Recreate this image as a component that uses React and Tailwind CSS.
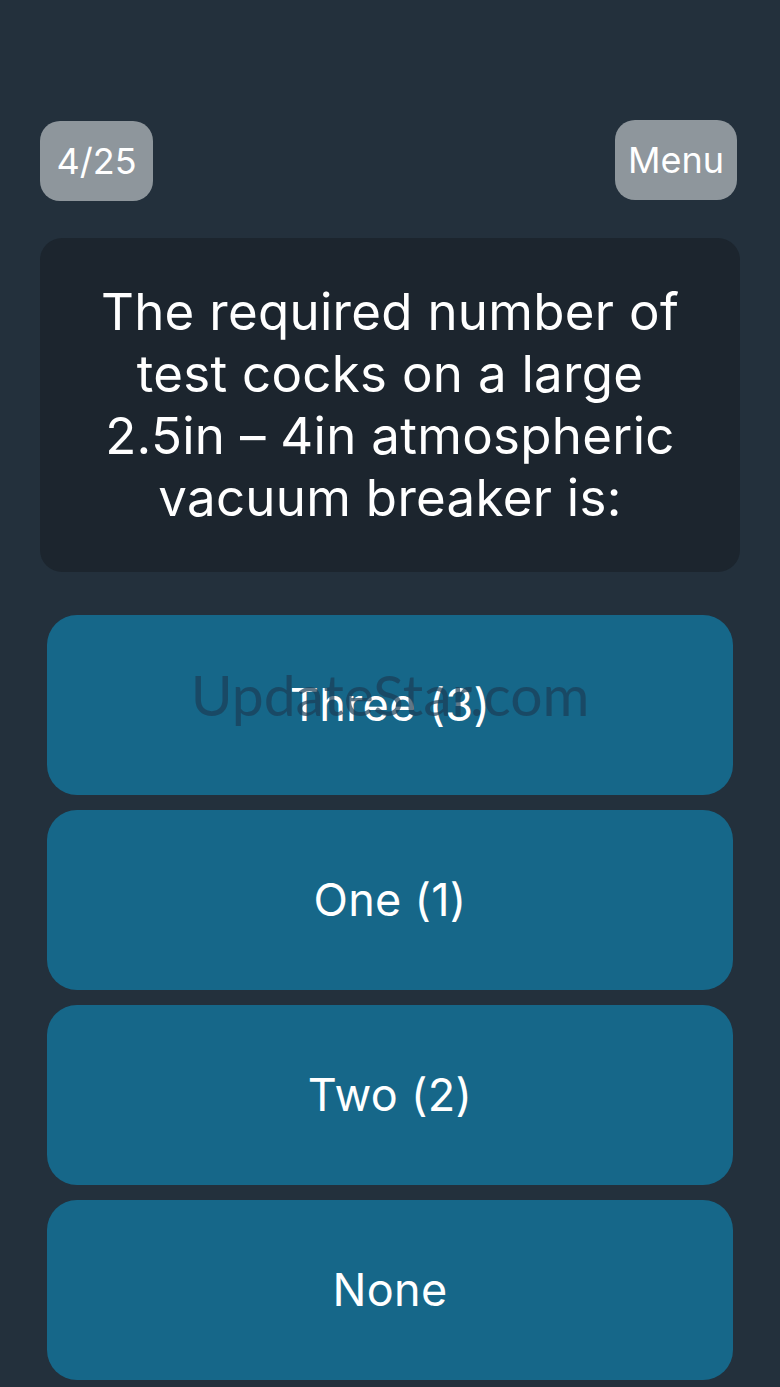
export default function App() {
  const answers = ["Three (3)", "One (1)", "Two (2)", "None"];
  return (
    <div className="w-[780px] h-[1387px] bg-[#23303c] overflow-hidden relative" style={{ fontFamily: "Inter, 'Noto Sans', sans-serif" }}>
      <div className="flex justify-between items-start pt-[120px] pl-[40px] pr-[43px]">
        <div className="mt-[1px] w-[113px] h-[80px] rounded-[20px] bg-[#8e969c] flex items-center justify-center text-white text-[36px]">4/25</div>
        <div className="w-[122px] h-[80px] rounded-[20px] bg-[#8e969c] flex items-center justify-center text-white text-[36px]">Menu</div>
      </div>
      <div className="mt-[37px] mx-[40px] h-[334px] rounded-[22px] bg-[#1c252e] flex items-center justify-center px-[20px]">
        <p className="text-white text-[51px] leading-[62px] text-center tracking-[0.3px]">
          The required number of<br />test cocks on a large<br />2.5in – 4in atmospheric<br />vacuum breaker is:
        </p>
      </div>
      <div className="mt-[43px] mx-[47px] flex flex-col gap-[15px]">
        {answers.map((a) => (
          <div key={a} className="h-[180px] rounded-[30px] bg-[#166789] flex items-center justify-center text-white text-[45px] tracking-[0.3px]">
            {a}
          </div>
        ))}
      </div>
      <div className="absolute left-0 right-0 top-[666px] text-center text-[57px] leading-none text-[#1b3d55]/70 pointer-events-none" style={{ fontFamily: "Lato, sans-serif" }}>
        UpdateStar.com
      </div>
    </div>
  );
}
